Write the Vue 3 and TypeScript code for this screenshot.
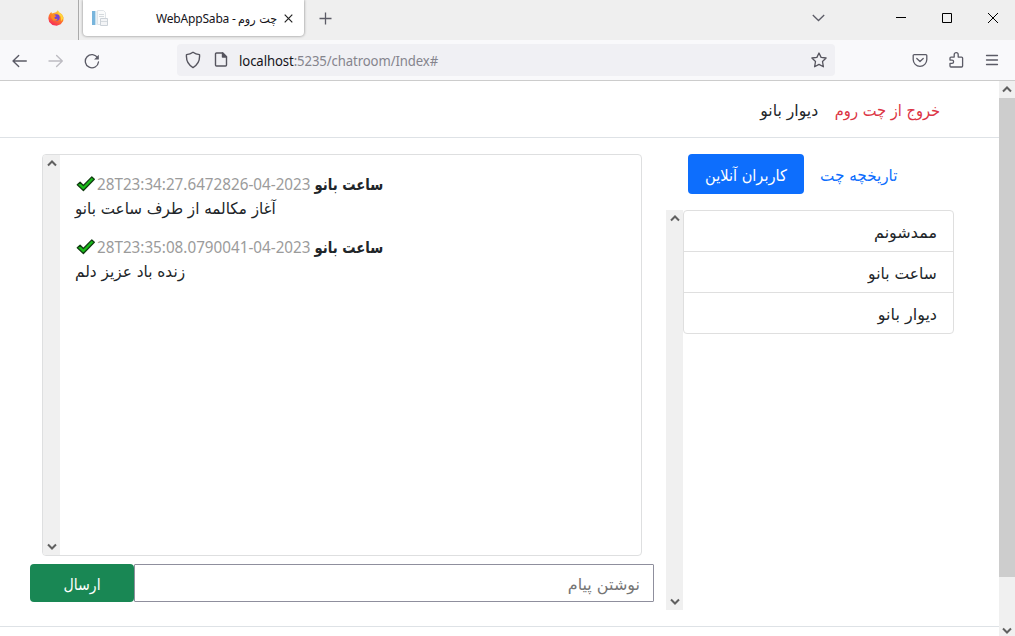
<script setup lang="ts">
interface Message { sender: string; time: string; text: string; kind: string }

const messages: Message[] = [
  { sender: 'ساعت بانو', time: '28T23:34:27.6472826-04-2023', text: 'آغاز مکالمه از طرف ساعت بانو', kind: 'first' },
  { sender: 'ساعت بانو', time: '28T23:35:08.0790041-04-2023', text: 'زنده باد عزیز دلم', kind: 'second' },
]
const users = [
  { name: 'ممدشونم', kind: 'u1' },
  { name: 'ساعت بانو', kind: 'u2' },
  { name: 'دیوار بانو', kind: 'u3' },
]
</script>

<template>
  <div class="window">
    <header class="tabs">
      <div class="pinned">
        <svg width="16" height="16" viewBox="0 0 16 16">
          <defs>
            <linearGradient id="fire" x1="0.8" y1="0" x2="0.3" y2="1">
              <stop offset="0" stop-color="#ffe14a" /><stop offset=".45" stop-color="#ff8a1f" /><stop offset="1" stop-color="#f5225f" />
            </linearGradient>
          </defs>
          <path d="M2.300 3.100 3.400 2l.5 1.500L5.400 3 8 2.200 9.800.2l1.400 2L14 4.300l1.600 3.100-.4 3.500-2.500 3.400-4 1.500-4.200-.8L1.200 12 .3 8.300l.6-3z" fill="url(#fire)" />
          <circle cx="8.400" cy="7.600" r="3.300" fill="#7542d6" />
          <path d="M3 5.500 6.700 5l1.700 1.300-2 .9.6 1.800 2.700-.3-1.400 2.100-3-.3L3.200 8z" fill="#ff8b22" />
          <path d="m9.500.3 1.300 2.400L14 4.800l1.300 3.400-2.200 3-.2-4.500-2.500-2.600z" fill="#ffd53c" />
        </svg>
      </div>
      <div class="tab">
        <svg class="favicon" width="16" height="17" viewBox="0 0 16 17">
          <path d="M0 1h3.500v14H0z" fill="#78b5dc" /><path d="M3.500 1h1v14h-1z" fill="#cfe3ee" />
          <path d="M5.500.5h6l2 2v12h-8z" fill="#fafbfb" stroke="#e0e4e8" />
          <path d="M8.500 8.500h7v7h-7z" fill="#f3f4f6" stroke="#ccd2d8" /><path d="M9 11.500h6M7 4.500h5M7 6.500h5" stroke="#d5dade" />
        </svg>
        <div class="tab-title"><span class="saba" dir="ltr">WebAppSaba - </span><span class="tab-fa" dir="rtl"><span class="t t-tab">چت روم</span></span></div>
        <svg class="close" width="9" height="9" viewBox="0 0 9 9"><path d="m.7.7 7.600 7.600m0-7.600L.7 8.300" stroke="#222" stroke-width="1.200" /></svg>
      </div>
      <svg class="plus" width="13" height="13" viewBox="0 0 13 13"><path d="M6.500.5v12M.5 6.500h12" stroke="#5b5b66" stroke-width="1.300" /></svg>
      <svg class="chevron" width="13" height="8" viewBox="0 0 13 8"><path d="m.8 1 5.700 5.500L12.200 1" fill="none" stroke="#5b5b66" stroke-width="1.300" /></svg>
      <svg class="controls" width="104" height="12" viewBox="0 0 104 12" fill="none" stroke="#000"><path d="M0 5.500h10M46.500 1.500h9v9h-9zM92 1l10 10m0-10L92 11" /></svg>
    </header>

    <nav class="toolbar">
      <svg class="nav-icons" width="88" height="16" viewBox="0 0 88 16" fill="none" stroke-width="1.350" stroke-linecap="round" stroke-linejoin="round">
        <path d="M14.300 8H1m5.700-5.600L1 8l5.700 5.600" stroke="#5b5b66" />
        <path d="M37 8h13.300m-5.700-5.600L50.300 8l-5.700 5.600" stroke="#bdbcc2" />
        <path d="M85.700 5A6.600 6.600 0 1 0 86.500 9" stroke="#5b5b66" /><path d="M86.800 1.800v4.700h-4.700z" fill="#5b5b66" />
      </svg>
      <div class="address">
        <svg width="44" height="18" viewBox="0 0 44 18" fill="none" stroke="#55545e" stroke-width="1.400" stroke-linejoin="round">
          <path d="M8 1.200c2 1.500 4 2.200 6.500 2.400.5 5.400-1.200 10-6.500 13C2.700 13.600 1 9 1.500 3.600 4 3.400 6 2.700 8 1.200z" />
          <path d="M31.500 2h6.300l3.700 3.800V14a1 1 0 0 1-1 1h-9a1 1 0 0 1-1-1V3a1 1 0 0 1 1-1z" /><path d="M37.500 2v4h4z" fill="#55545e" />
        </svg>
        <div class="url"><b>localhost</b><span>:5235/chatroom/Index#</span></div>
        <svg class="star" width="16" height="16" viewBox="0 0 16 16"><path d="m8 1 2.100 4.400 5 .6-3.600 3.500.9 5.300L8 12.400l-4.400 2.400.9-5.300L.9 6l5-.6z" fill="none" stroke="#55545e" stroke-width="1.300" stroke-linejoin="round" /></svg>
      </div>
      <svg class="tools" width="88" height="18" viewBox="0 0 88 18" fill="none" stroke="#5b5b66" stroke-width="1.300" stroke-linecap="round" stroke-linejoin="round">
        <path d="M2.200 2.600h11.600a1 1 0 0 1 1 1v4a6.300 6.300 0 0 1-13.600 0v-4a1 1 0 0 1 1-1zM4.800 6.500 8 9.500l3.200-3" />
        <path d="M39 5.100h3.200V2.700a2 2 0 0 1 4 0v2.400h3.400a1 1 0 0 1 1 1V14a1 1 0 0 1-1 1H39a1 1 0 0 1-1-1v-2.700h2a1.600 1.600 0 0 0 0-3.200h-2v-2a1 1 0 0 1 1-1z" />
        <path d="M74.500 3.500h11M74.500 8h11M74.500 12.500h11" />
      </svg>
    </nav>

    <div class="viewport">
      <main class="page" dir="rtl">
        <div class="site-nav"><a class="exit"><span class="t t-exit">خروج از چت روم</span></a><a><span class="t t-user">دیوار بانو</span></a></div>
        <div class="content">
          <aside>
            <div class="pills"><a class="history"><span class="t t-history">تاریخچه چت</span></a><button><span class="t t-online">کاربران آنلاین</span></button></div>
            <div class="user-pane">
              <ul><li v-for="user in users" :key="user.name"><span class="t" :class="user.kind">{{ user.name }}</span></li></ul>
              <div class="scroll"><svg viewBox="0 0 10 7"><path d="m1 5.500 4-4 4 4" /></svg><svg viewBox="0 0 10 7"><path d="m1 1.500 4 4 4-4" /></svg></div>
            </div>
          </aside>
          <section>
            <div class="chat" dir="ltr">
              <div class="scroll"><svg viewBox="0 0 10 7"><path d="m1 5.500 4-4 4 4" /></svg><svg viewBox="0 0 10 7"><path d="m1 1.500 4 4 4-4" /></svg></div>
              <div class="messages">
                <article v-for="message in messages" :key="message.time">
                  <div class="meta">
                    <svg width="20" height="16" viewBox="0 0 20 16"><path d="m1.300 8.800 2.800-2.500 3.300 3.200 8.400-8.600 2.500 2.300L7.400 14.500z" fill="#18bd18" stroke="#123d12" stroke-width="1.300" stroke-linejoin="round" /></svg>
                    <time><span>{{ message.time }}</span></time><strong dir="rtl"><span class="t t-sender">{{ message.sender }}</span></strong>
                  </div>
                  <p dir="rtl"><span class="t" :class="message.kind">{{ message.text }}</span></p>
                </article>
              </div>
            </div>
            <div class="composer"><div class="field"><span class="t t-placeholder">نوشتن پیام</span></div><button><span class="t t-send">ارسال</span></button></div>
          </section>
        </div>
        <footer></footer>
      </main>
      <div class="page-scroll"><svg viewBox="0 0 10 7"><path d="m1 5.500 4-4 4 4" /></svg><i></i><svg viewBox="0 0 10 7"><path d="m1 1.500 4 4 4-4" /></svg></div>
    </div>
  </div>
</template>

<style>
body { margin: 0; overflow: hidden; }
</style>
<style scoped>
* { box-sizing: border-box; }
.window { width: 1015px; height: 636px; overflow: hidden; background: #fff; color: #212529; font: 16px/24px "DejaVu Sans", sans-serif; }
svg { display: block; flex: none; }
.tabs { height: 40px; display: flex; background: #efefef; }
.pinned { width: 79px; border-right: 1px solid #aaa; padding: 10px 0 0 48px; flex: none; }
.tab { width: 221px; height: 36px; margin-left: 4px; background: #fff; border-radius: 0 0 4px 4px; box-shadow: 0 0 3px #0007; display: flex; flex: none; }
.favicon { margin: 10px 0 0 9px; }
.tab-title { display: flex; width: 121px; margin: 8px 0 0 48px; height: 22px; font: 12px/22px "Noto Sans", sans-serif; color: #15141a; white-space: pre; flex: none; }
.saba { width: 81px; flex: none; letter-spacing: -.18px; }
.tab-fa { width: 40px; flex: none; font: 12px/22px "DejaVu Sans", sans-serif; }
.close { margin: 14px 0 0 7px; }
.plus { margin: 12px 0 0 15px; }
.chevron { margin: 14px 0 0 480px; }
.controls { margin: 12px 0 0 71px; }
.toolbar { height: 41px; background: #f9f9fb; border-bottom: 1px solid #ccc; display: flex; }
.nav-icons { margin: 13px 0 0 12px; }
.address { width: 658px; height: 32px; margin: 4px 0 0 77px; background: #f0f0f4; border-radius: 4px; display: flex; flex: none; }
.address > svg:first-child { margin: 7px 0 0 8px; }
.url { width: 215px; margin-left: 10px; font: 14px/33px "Noto Sans", sans-serif; letter-spacing: -.1px; color: #85848d; transform: scaleX(.938); transform-origin: left center; }
.url b { font-weight: 400; color: #15141a; }
.star { margin: 8px 8px 0 auto; }
.tools { margin: 12px 0 0 77px; }
.viewport { height: 555px; display: flex; }
.page { width: 999px; height: 555px; }
.page-scroll { width: 16px; height: 555px; background: #f0f0f0; display: flex; flex-direction: column; align-items: center; }
.page-scroll svg { width: 10px; height: 7px; margin-top: 5px; }
.page-scroll i { width: 16px; height: 479px; background: #cdcdcd; margin-top: 5px; }
.page-scroll svg:last-child { margin-top: auto; margin-bottom: 2px; }
.page-scroll path, .scroll path { fill: none; stroke: #606060; stroke-width: 2; }
.site-nav { height: 57px; border-bottom: 1px solid #dee2e6; padding: 18px 59px 0 0; display: flex; gap: 16px; }
.site-nav a { width: 59px; }
.site-nav .exit { width: 106px; color: #dc3545; }
.content { height: 488px; padding: 16px 45px 0 30px; display: flex; gap: 12px; }
aside { width: 288px; flex: none; }
.pills { height: 40px; padding-right: 40px; display: flex; }
.history { width: 110px; padding: 10px 17px 6px 15px; color: #0d6efd; }
button { border: 0; color: #fff; border-radius: 4px; font: inherit; margin: 0; }
.pills button { width: 116px; height: 40px; background: #0d6efd; padding: 10px 17px 6px 15px; text-align: right; }
.user-pane { height: 400px; margin-top: 16px; display: flex; }
ul { width: 271px; height: 124px; margin: 0; padding: 0; list-style: none; border: 1px solid #dfdfdf; border-radius: 4px; }
li { height: 41px; padding: 10px 16px 6px; border-bottom: 1px solid #dfdfdf; }
li:last-child { border-bottom: 0; }
.scroll { width: 17px; background: #f0f0f0; display: flex; flex-direction: column; align-items: center; justify-content: space-between; padding: 5px 0; flex: none; }
.scroll svg { width: 10px; height: 7px; }
section { width: 624px; }
.chat { width: 600px; height: 402px; margin-right: 12px; border: 1px solid #dedfe0; border-radius: 4px; display: flex; overflow: hidden; }
.messages { padding: 18px 0 0 15px; }
article { width: 308px; height: 63px; }
.meta { height: 24px; display: flex; }
.meta svg { margin: 3px 0 0 1px; }
time { width: 217px; margin-left: 1px; flex: none; font: 16px/22px "Noto Sans", sans-serif; color: #9b9b9b; white-space: nowrap; }
time span { display: inline-block; transform: scaleX(.952); transform-origin: left center; }
strong { width: 69px; flex: none; }
article p { margin: 0; width: max-content; }
.composer { height: 38px; margin-top: 8px; display: flex; }
.field { width: 520px; border: 1px solid #8f8f9d; border-radius: 1px; padding: 8px 13px 4px; color: #757575; }
.composer button { width: 104px; height: 38px; background: #198754; text-align: center; padding: 9px 0 5px; }
footer { border-top: 1px solid #dee2e6; }
.t { display: inline-block; white-space: nowrap; transform-origin: right center; }
p .t { transform-origin: left center; }
.t-tab { transform: scaleX(.93); }
.t-exit { transform: scaleX(.915); }
.t-user { transform: scaleX(.98); }
.t-history { transform: scaleX(.95); }
.t-online { transform: scaleX(.91); }
.t-sender { transform: scaleX(.825); }
.t.first { transform: scaleX(.948); }
.t.second { transform: scaleX(.957); }
.t.u2 { transform: scaleX(.97); }
.t-send { transform: scaleX(.88); transform-origin: center; }
</style>
